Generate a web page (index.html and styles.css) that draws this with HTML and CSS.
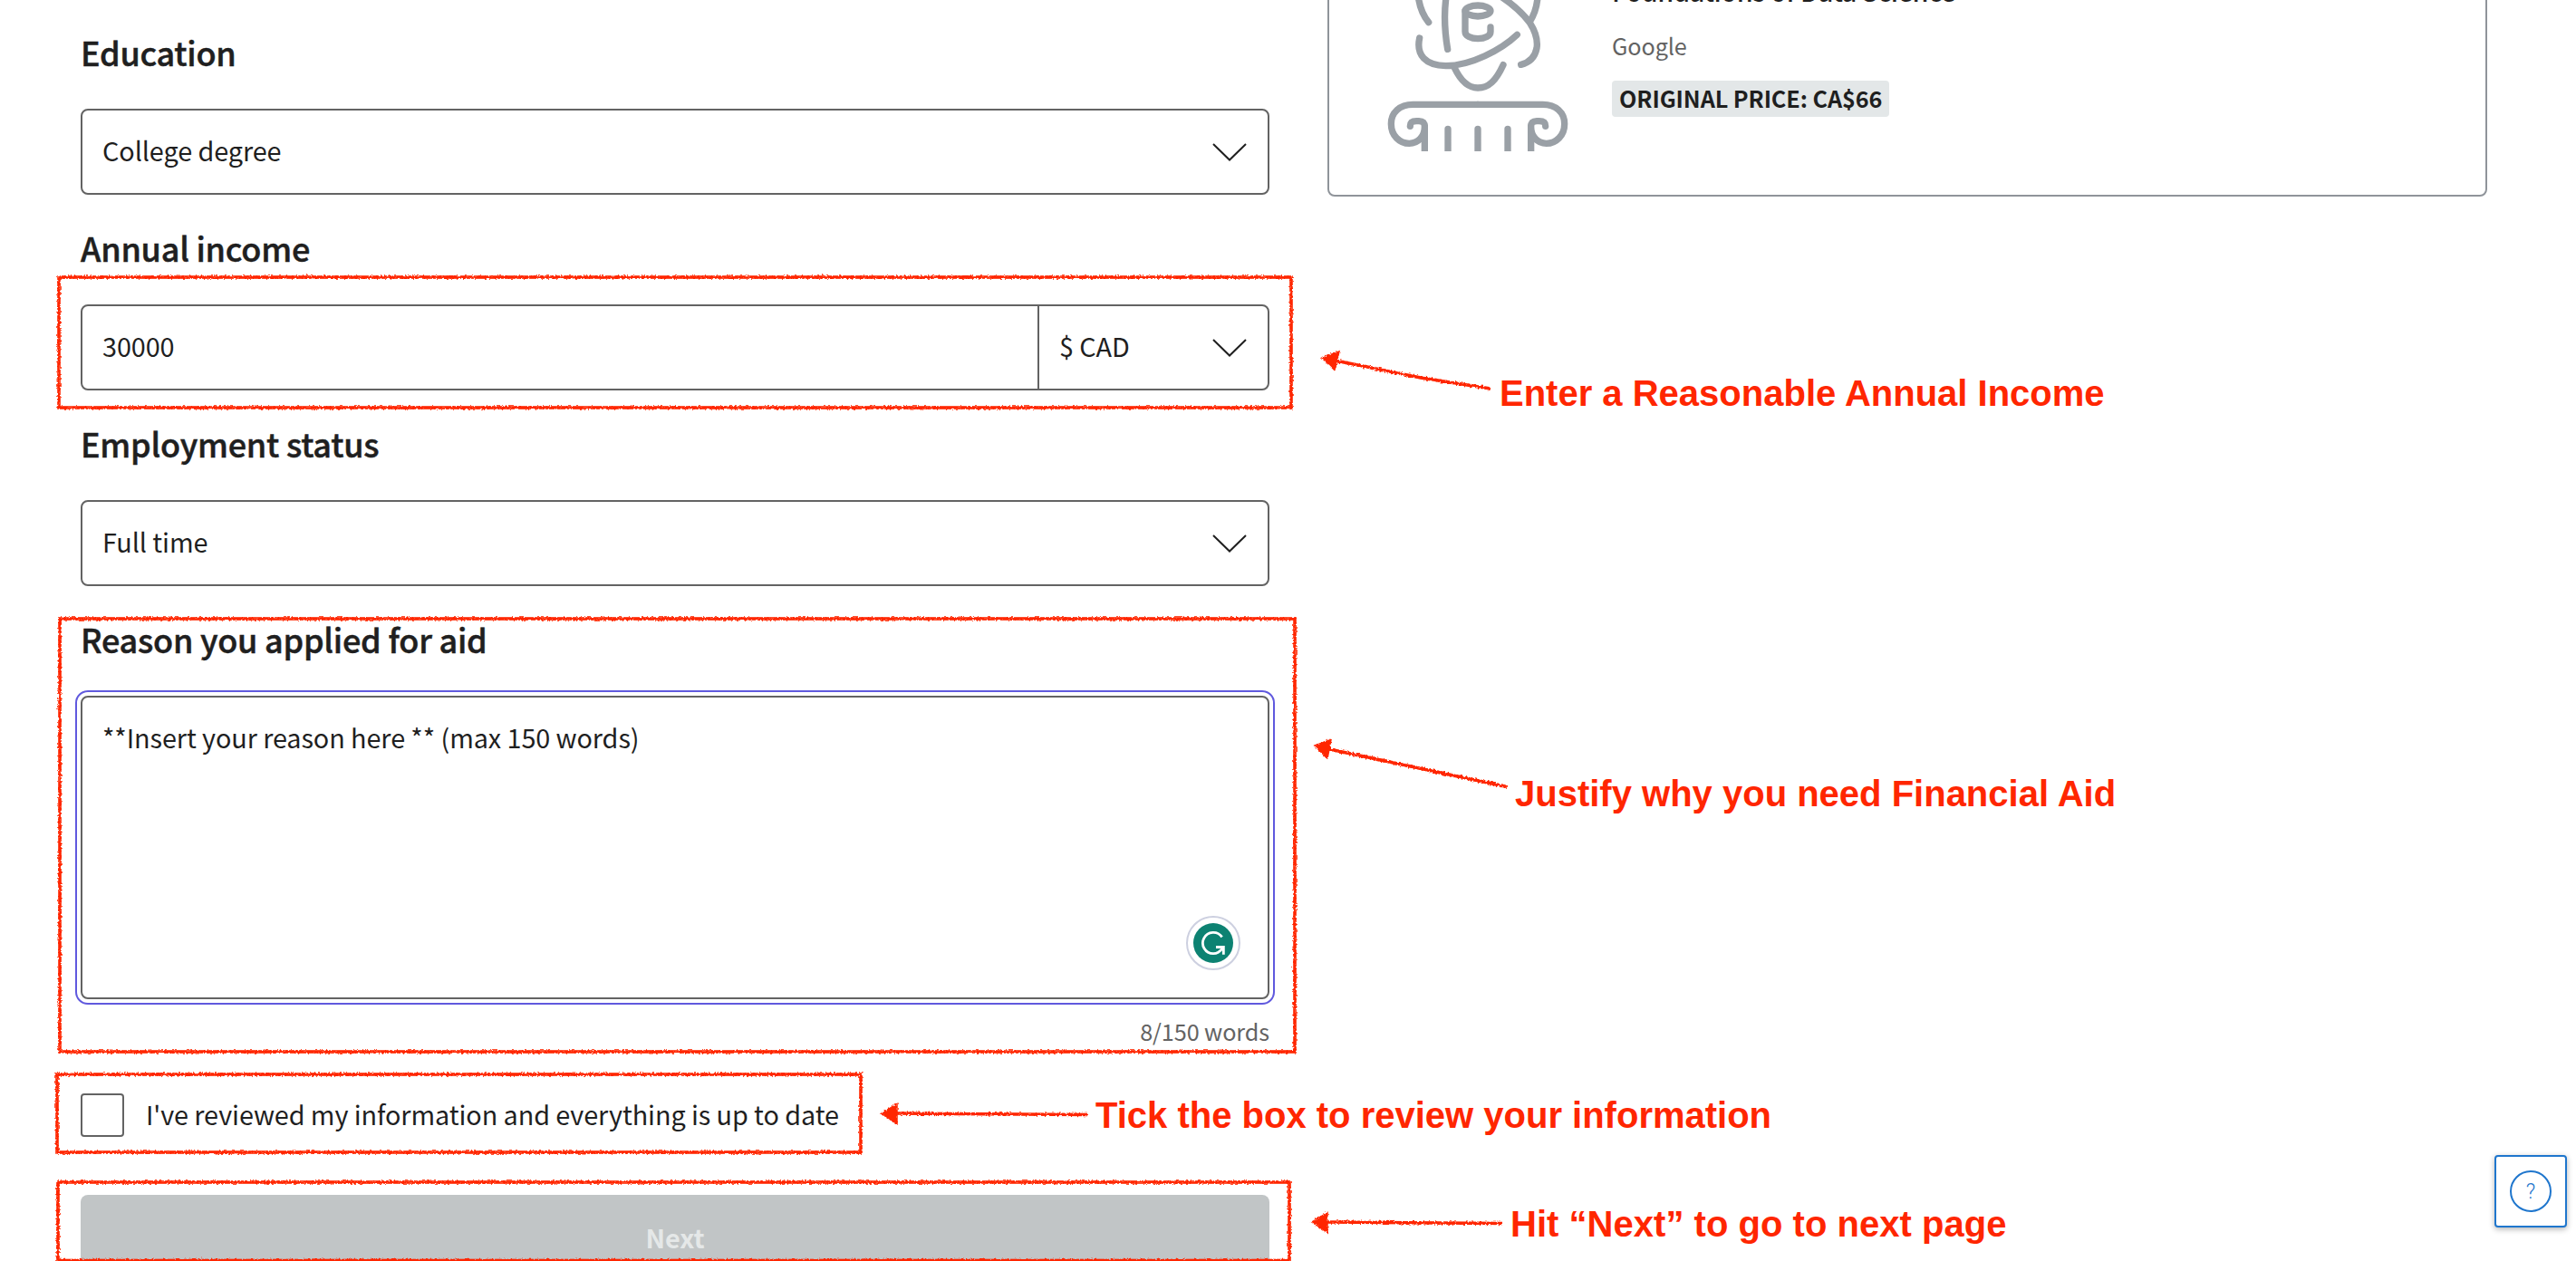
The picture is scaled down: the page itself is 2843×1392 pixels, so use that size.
FILE: index.html
```html
<!DOCTYPE html>
<html lang="en">
<head>
<meta charset="utf-8">
<title>Financial Aid Application</title>
<link rel="stylesheet" href="styles.css">
</head>
<body>
<main class="page">
  <form class="form">
    <div class="field">
      <div class="label">Education</div>
      <div class="control">
        <span class="value">College degree</span>
        <svg class="chevron" viewBox="0 0 38 20"><path d="M1 1L19 18.5L37 1"/></svg>
      </div>
    </div>
    <div class="field">
      <div class="label">Annual income</div>
      <div class="control">
        <span class="value">30000</span>
        <div class="currency">
          <span class="value">$ CAD</span>
          <svg class="chevron" viewBox="0 0 38 20"><path d="M1 1L19 18.5L37 1"/></svg>
        </div>
      </div>
    </div>
    <div class="field">
      <div class="label">Employment status</div>
      <div class="control">
        <span class="value">Full time</span>
        <svg class="chevron" viewBox="0 0 38 20"><path d="M1 1L19 18.5L37 1"/></svg>
      </div>
    </div>
    <div class="reason">
      <div class="label">Reason you applied for aid</div>
      <div class="textarea">
        <span>**Insert your reason here ** (max 150 words)</span>
        <svg class="grammarly" viewBox="327 93 180 180">
          <circle class="ring" cx="417" cy="183" r="87"/>
          <circle class="disc" cx="417" cy="183" r="66"/>
          <path class="mark" d="M446 163A35 35 0 1 0 417 218C431 218 440 211 447 201M426 196.500H451V221"/>
        </svg>
      </div>
      <div class="count">8/150 words</div>
    </div>
    <label class="review">
      <span class="checkbox"></span>
      <span class="review-text">I've reviewed my information and everything is up to date</span>
    </label>
    <div class="next">Next</div>
  </form>

  <aside class="card">
    <svg class="logo" viewBox="0 0 666 501">
      <path d="M136 -10C140 20 153 53 170 74M228 -10C220 50 224 110 233 163M531 -10C529 20 520 48 505 72M396 -20C445 10 480 42 505 75C526 108 532 135 528 160C522 190 502 208 476 214M140 126C128 183 160 217 227 218C310 218 410 165 463 115M256 225C276 267 303 291 333 291C369 291 393 267 417 215"/>
      <ellipse cx="333" cy="36" rx="42" ry="18"/>
      <path d="M291 36V105C291 119 310 128 333 128C357 128 375 119 375 105V90"/>
      <path d="M333 346H118C74 346 46 373 46 410C46 449 74 475 106 475C136 475 157 451 157 420C157 405 150 401 138 401H130C115 401 109 406 109 418M157 415V520M234 427V520M333 427V520"/>
      <path transform="translate(666 0) scale(-1 1)" d="M333 346H118C74 346 46 373 46 410C46 449 74 475 106 475C136 475 157 451 157 420C157 405 150 401 138 401H130C115 401 109 406 109 418M157 415V520M234 427V520"/>
    </svg>
    <div class="course">
      <div class="course-title">Foundations of Data Science</div>
      <div class="partner">Google</div>
      <div class="price">ORIGINAL PRICE: CA$66</div>
    </div>
  </aside>
</main>

<svg class="marks" viewBox="0 0 2843 1392">
  <defs>
    <filter id="crayon" filterUnits="userSpaceOnUse" x="0" y="0" width="2843" height="1392">
      <feTurbulence type="fractalNoise" baseFrequency="0.45" numOctaves="2" seed="4" result="n"/>
      <feDisplacementMap in="SourceGraphic" in2="n" scale="4" xChannelSelector="R" yChannelSelector="G"/>
    </filter>
  </defs>
  <g filter="url(#crayon)">
    <rect x="65" y="306" width="1360" height="144"/>
    <rect x="66" y="683" width="1363" height="478"/>
    <rect x="63" y="1186" width="887" height="86"/>
    <rect x="64" y="1305" width="1359" height="86.500"/>
    <path d="M1476 398.500L1568 417L1645 429M1467 827L1663 868.500M988 1229L1200 1230.500M1463 1349L1658 1350.500"/>
    <path class="head" d="M1459 395L1478 388L1473 408.500ZM1451 823L1469 816.500L1465 837.500ZM973 1229L990 1218.500V1240.500ZM1448 1349L1465 1338.500V1360.500Z"/>
  </g>
</svg>
<div class="note note-income">Enter a Reasonable Annual Income</div>
<div class="note note-reason">Justify why you need Financial Aid</div>
<div class="note note-review">Tick the box to review your information</div>
<div class="note note-next">Hit “Next” to go to next page</div>
<div class="help"><span class="help-icon">?</span></div>
</body>
</html>
```
FILE: styles.css
```css
* { box-sizing: border-box; }
body {
  margin: 0;
  height: 1392px;
  overflow: hidden;
  position: relative;
  background: #fff;
  color: #1f1f1f;
  font: 28.8px/40px "Noto Sans CJK SC", "Noto Sans", sans-serif;
  letter-spacing: -0.08px;
}
.page {
  display: flex;
  align-items: flex-start;
  gap: 64px;
  padding-left: 89px;
  height: 1392px;
}
.form {
  width: 1312px;
  flex: none;
  padding-top: 37px;
}
.field { margin-bottom: 38px; }
.label {
  font-size: 36px;
  font-weight: 500;
  letter-spacing: -0.24px;
  -webkit-text-stroke: 0.5px #1f1f1f;
  height: 40px;
  margin-bottom: 43px;
}
.control {
  display: flex;
  align-items: center;
  justify-content: space-between;
  height: 95px;
  border: 2px solid #636363;
  border-radius: 8px;
  padding: 0 23px 0 22px;
}
.value { padding-bottom: 3px; }
.chevron {
  width: 38px;
  height: 20px;
  fill: none;
  stroke: #1f1f1f;
  stroke-width: 2;
}
.currency {
  display: flex;
  align-items: center;
  justify-content: space-between;
  align-self: stretch;
  width: 231px;
  border-left: 2px solid #636363;
  padding-left: 22px;
}
.textarea {
  display: flex;
  justify-content: space-between;
  height: 335px;
  border: 2px solid #636363;
  border-radius: 8px;
  outline: 2px solid #6059de;
  outline-offset: 4px;
  padding: 24px 30px 30px 22px;
}
.grammarly {
  align-self: flex-end;
  width: 60px;
  height: 60px;
}
.ring { fill: #fff; stroke: #cdd0e0; stroke-width: 6; }
.disc { fill: #0d8272; }
.mark { fill: none; stroke: #fff; stroke-width: 8.500; }
.count {
  margin-top: 17px;
  line-height: 36px;
  font-size: 25.2px;
  color: #636363;
  text-align: right;
}
.review {
  display: flex;
  align-items: center;
  gap: 24px;
  margin-top: 51px;
}
.checkbox {
  width: 48px;
  height: 48px;
  border: 2px solid #636363;
  border-radius: 4px;
}
.review-text { padding-bottom: 3px; }
.next {
  display: flex;
  align-items: center;
  justify-content: center;
  height: 96px;
  margin-top: 64px;
  padding-bottom: 3px;
  border-radius: 8px;
  background: #c1c5c6;
  color: #e5e8e8;
  font-weight: 700;
}
.card {
  display: flex;
  align-items: flex-start;
  gap: 37px;
  width: 1280px;
  height: 257px;
  margin-top: -40px;
  padding-left: 53px;
  border: 2px solid #8f949a;
  border-radius: 8px;
}
.logo {
  flex: none;
  width: 222px;
  height: 167px;
  margin-top: 38px;
  fill: none;
  stroke: #9aa0a6;
  stroke-width: 22;
  stroke-linecap: round;
  stroke-linejoin: round;
}
.course {
  display: flex;
  flex-direction: column;
  align-items: flex-start;
  padding-top: 8px;
}
.course-title { font-weight: 500; letter-spacing: -0.36px; }
.partner {
  margin-top: 22px;
  font-size: 25.2px;
  line-height: 36px;
  color: #636363;
}
.price {
  margin-top: 21px;
  height: 40px;
  padding: 0 8px;
  border-radius: 4px;
  background: #e3e7e8;
  font-size: 25.2px;
  font-weight: 700;
  line-height: 39px;
}
.marks {
  position: absolute;
  left: 0;
  top: 0;
  width: 2843px;
  height: 1392px;
  fill: none;
  stroke: #ff2600;
  stroke-width: 3.600;
  pointer-events: none;
}
.head { fill: #ff2600; stroke-width: 1.500; }
.note {
  position: absolute;
  color: #ff2600;
  font: 700 40px/44px "Liberation Sans", Arial, sans-serif;
  letter-spacing: 0;
  white-space: nowrap;
}
.note-income { left: 1655px; top: 412px; }
.note-reason { left: 1672px; top: 854px; }
.note-review { left: 1209px; top: 1209px; }
.note-next { left: 1667px; top: 1329px; letter-spacing: 0.03px; }
.help {
  position: absolute;
  left: 2753px;
  top: 1275px;
  width: 80px;
  height: 80px;
  display: flex;
  align-items: center;
  justify-content: center;
  border: 2px solid #1f76cd;
  border-radius: 4px;
  background: #fff;
  box-shadow: 0 2px 6px rgba(0, 0, 0, 0.3);
}
.help-icon {
  width: 46px;
  height: 46px;
  border: 2px solid #1f76cd;
  border-radius: 50%;
  color: #1f76cd;
  font: 300 23px/44px Roboto, sans-serif;
  text-align: center;
}
```
